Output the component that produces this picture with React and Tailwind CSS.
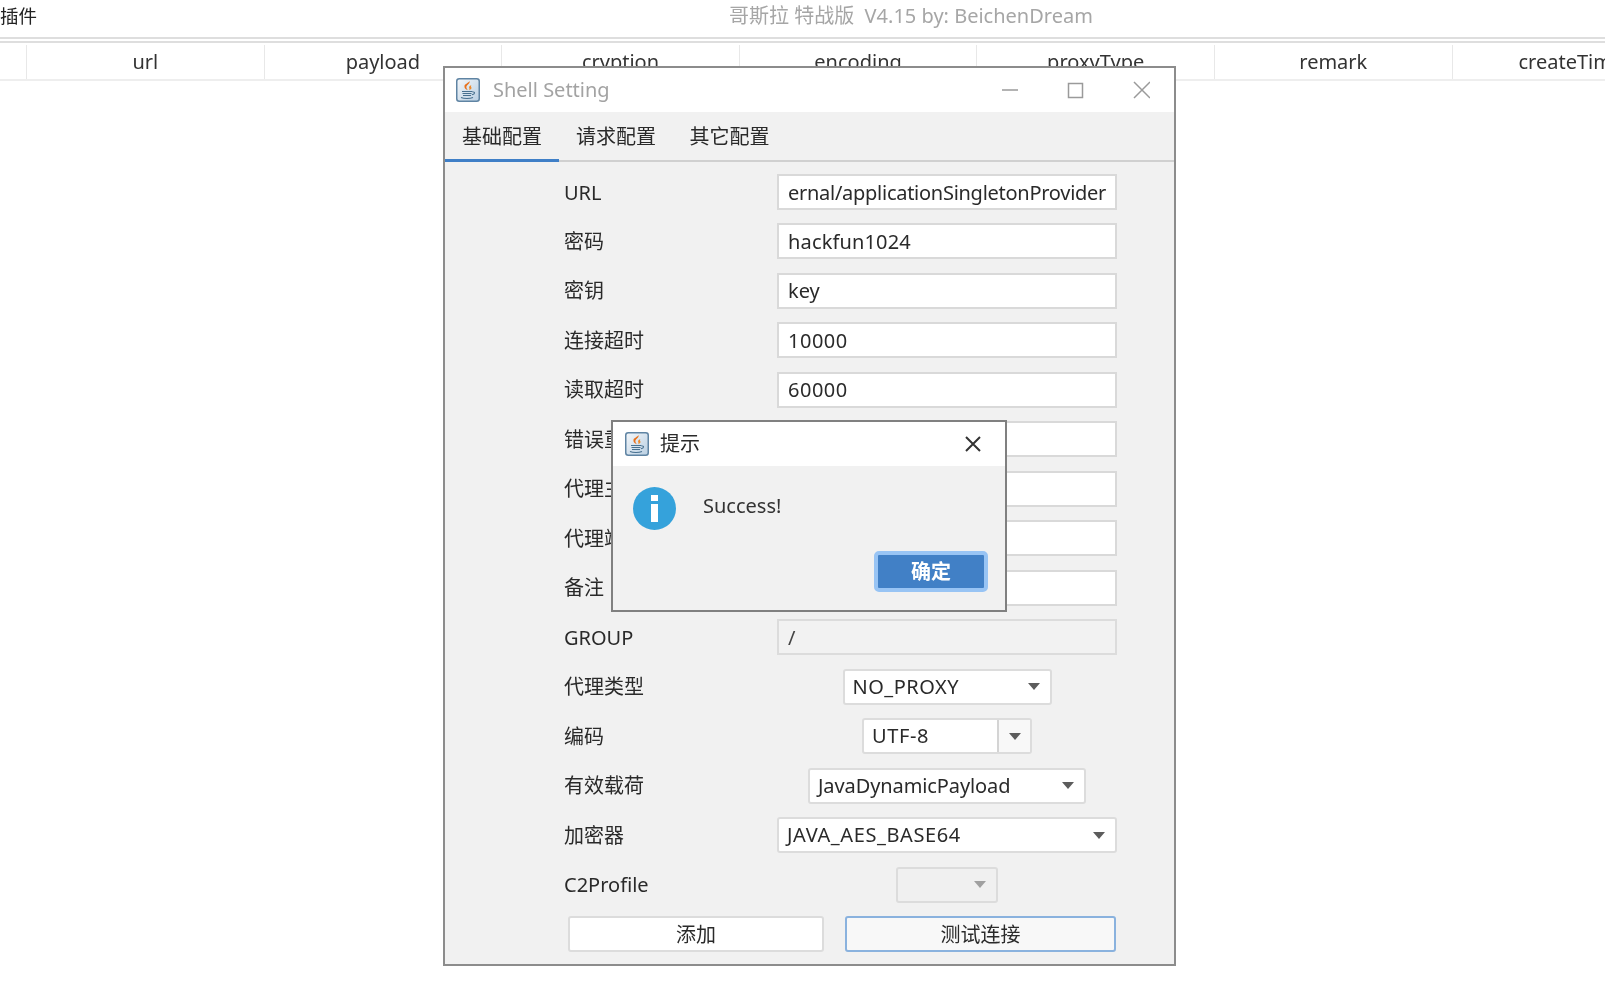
const sans = 'font-["Noto_Sans","Noto_Sans_CJK_SC",sans-serif]';

function JavaIcon() {
  return (
    <svg width="24" height="24" viewBox="0 0 24 24" className="shrink-0">
      <defs>
        <linearGradient id="jbg" x1="0" y1="0" x2="1" y2="1">
          <stop offset="0" stopColor="#f4f7fa" />
          <stop offset="1" stopColor="#b9cfe2" />
        </linearGradient>
      </defs>
      <rect x="0.75" y="0.75" width="22.5" height="22.5" rx="2.5" fill="url(#jbg)" stroke="#5f84a3" strokeWidth="1.5" />
      <path d="M13.5 3c1 2.8-4 4.2-3 7 .3 1 .9 1.6 1.4 2.2-2.3-.6-3.9-2.2-3.4-4.4.4-1.9 4.2-2.9 5-4.8z" fill="#e8701a" />
      <path d="M15.5 7c-2.3 1-2.9 2.1-2.1 3.4.3.6.2 1.1-.3 1.8 2.1-.8 3-1.9 2.1-3.2-.4-.6-.3-1.2.3-2z" fill="#ee8a2a" />
      <path d="M6 13.5h10.5M6.5 15.5h9M7 17.5h8" stroke="#47708f" strokeWidth="1.2" fill="none" />
      <path d="M5 19.5c3 1.3 9 1.3 12 0M16.5 14c2.8-.5 2.8 2.2-.6 2.8" stroke="#47708f" strokeWidth="1.1" fill="none" />
    </svg>
  );
}

function Caret({ disabled }) {
  return <span className={`h-0 w-0 border-x-[6px] border-t-[7px] border-x-transparent ${disabled ? 'border-t-[#a0a0a0]' : 'border-t-[#5c5c5c]'}`} />;
}

function Field({ value, disabled, tracking = '' }) {
  return (
    <div className={`flex h-[36px] w-[340px] items-center border-2 px-2 text-[20px] ${tracking} ${disabled ? 'border-[#dcdcdc] bg-[#f2f2f2] text-[#444444]' : 'border-[#d9d9d9] bg-white text-[#2a2a2a]'}`}>
      <span className="pt-px pl-px whitespace-nowrap">{value}</span>
    </div>
  );
}

function Combo({ value, width, split, disabled, tracking = '' }) {
  return (
    <div className={`flex h-[36px] items-center justify-between rounded-[3px] border-2 border-[#dcdcdc] text-[20px] ${width} ${tracking} ${disabled ? 'bg-[#f0f0f0]' : 'bg-white text-[#2a2a2a]'}`}>
      <span className="pl-2 whitespace-nowrap">{value}</span>
      {split ? (
        <span className="flex h-full w-[33px] items-center justify-center border-l-2 border-[#d4d4d4] bg-[#f8f8f8]"><Caret /></span>
      ) : (
        <span className="flex pr-[10px]"><Caret disabled={disabled} /></span>
      )}
    </div>
  );
}

const rows = [
  ['URL', <Field value="ernal/applicationSingletonProvider" tracking="tracking-[-0.27px]" />],
  ['密码', <Field value="hackfun1024" tracking="tracking-[0.15px]" />],
  ['密钥', <Field value="key" />],
  ['连接超时', <Field value="10000" tracking="tracking-[0.5px]" />],
  ['读取超时', <Field value="60000" tracking="tracking-[0.5px]" />],
  ['错误重试', <Field value="" />],
  ['代理主机', <Field value="" />],
  ['代理端口', <Field value="" />],
  ['备注', <Field value="" />],
  ['GROUP', <Field value="/" disabled />],
  ['代理类型', <Combo value="NO_PROXY" width="w-[209px]" tracking="tracking-[0.5px]" />],
  ['编码', <Combo value="UTF-8" width="w-[170px]" tracking="tracking-[0.6px]" split />],
  ['有效载荷', <Combo value="JavaDynamicPayload" width="w-[278px]" tracking="tracking-[-0.1px]" />],
  ['加密器', <Combo value="JAVA_AES_BASE64" width="w-[340px]" tracking="tracking-[0.6px]" />],
  ['C2Profile', <Combo value="" width="w-[102px]" disabled />],
];

export default function App() {
  return (
    <div className={`relative h-[984px] w-[1605px] overflow-hidden bg-white blur-[0.5px] ${sans}`}>
      {/* Main window */}
      <div className="relative flex h-[37px] items-center pb-[6px]">
        <span className="text-[18.5px] text-[#222222]">插件</span>
        <span className="absolute left-[729px] text-[20px] whitespace-nowrap text-[#a6a6a6]">哥斯拉 特战版&nbsp; V4.15 by: BeichenDream</span>
      </div>
      <div className="h-[6px] border-y-2 border-[#dedede]" />
      <div className="flex h-[38px] border-b-2 border-[#eeeeee] pt-[2px] text-[20px] text-[#333333]">
        <div className="w-[27px] shrink-0 border-r border-[#e8e8e8]" />
        {['url', 'payload', 'cryption', 'encoding', 'proxyType', 'remark', 'createTime'].map((name) => (
          <div key={name} className="flex w-[237.6px] shrink-0 items-center justify-center border-r border-[#e8e8e8] whitespace-nowrap">{name}</div>
        ))}
      </div>

      {/* Shell Setting window */}
      <div className="absolute top-[66px] left-[443px] flex h-[900px] w-[733px] flex-col border-2 border-[#8c8c8c] bg-[#f1f1f1]">
        <div className="flex h-[44px] shrink-0 items-center bg-white pr-[24px] pl-[11px]">
          <JavaIcon />
          <span className="ml-[13px] text-[20px] text-[#a3a3a3]">Shell Setting</span>
          <svg width="148" height="20" viewBox="0 0 148 20" className="ml-auto" fill="none" stroke="#9a9a9a" strokeWidth="1.5">
            <path d="M0 10h16" />
            <rect x="66.5" y="3.5" width="14" height="14" />
            <path d="M148 2l-16 16M132 2l16 16" />
          </svg>
        </div>
        <div className="flex h-[50px] shrink-0 border-b-2 border-[#d0d0d0] text-[20px] text-[#2a2a2a]">
          <div className="-mb-[2px] flex w-[114px] items-center justify-center border-b-[3px] border-[#3f7fc7] pt-[2px]">基础配置</div>
          <div className="flex w-[114px] items-center justify-center pt-[2px]">请求配置</div>
          <div className="flex w-[113px] items-center justify-center pt-[2px]">其它配置</div>
        </div>
        <div className="flex flex-col gap-[13.47px] pt-[12px] pr-[57px] pl-[119px]">
          {rows.map(([label, control]) => (
            <div key={label} className="flex h-[36px] items-center justify-between">
              <span className="pt-px text-[20px] text-[#2a2a2a]">{label}</span>
              <div className="flex w-[340px] justify-center">{control}</div>
            </div>
          ))}
          <div className="flex h-[36px] items-center gap-[21px] pl-[4px] text-[20px] text-[#2a2a2a]">
            <button className="h-full w-[256px] rounded-[3px] border-2 border-[#dcdcdc] bg-white pt-px">添加</button>
            <button className="h-full w-[271px] rounded-[3px] border-2 border-[#8ab2de] bg-[#f8f8f8] pt-px">测试连接</button>
          </div>
        </div>
      </div>

      {/* Success dialog */}
      <div className="absolute top-[420px] left-[611px] flex h-[192px] w-[396px] flex-col border-2 border-[#808080] bg-[#f1f1f1]">
        <div className="flex h-[44px] shrink-0 items-center bg-white pr-[24px] pl-[12px]">
          <JavaIcon />
          <span className="ml-[11px] text-[20px] text-[#2a2a2a]">提示</span>
          <svg width="16" height="16" viewBox="0 0 16 16" className="ml-auto" fill="none" stroke="#333333" strokeWidth="2">
            <path d="M1 1l14 14M15 1L1 15" />
          </svg>
        </div>
        <div className="flex items-start pt-[21px] pl-[20px]">
          <svg width="43" height="43" viewBox="0 0 43 43" className="shrink-0">
            <circle cx="21.5" cy="21.5" r="21.5" fill="#35a2db" />
            <rect x="18" y="8" width="7" height="6" fill="#ffffff" />
            <rect x="18" y="17" width="7" height="18" fill="#ffffff" />
          </svg>
          <span className="ml-[27px] pt-[4px] text-[20px] text-[#333333]">Success!</span>
        </div>
        <div className="mt-[21px] mr-[17px] flex justify-end">
          <button className="h-[41px] w-[114px] rounded-[5px] border-[4px] border-[#98c4f4] bg-[#4180c6] pt-px text-[20px] font-semibold text-white">确定</button>
        </div>
      </div>
    </div>
  );
}
